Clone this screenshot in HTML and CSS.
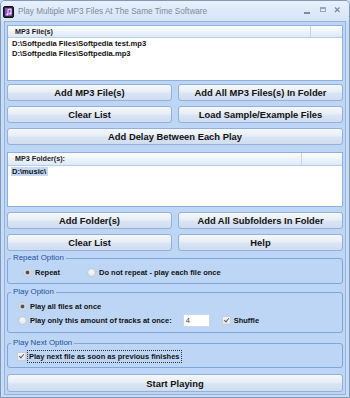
FILE: index.html
```html
<!DOCTYPE html>
<html lang="en">
<head>
    <meta charset="UTF-8">
    <meta name="viewport" content="width=device-width, initial-scale=1.0">
    <title>Play Multiple MP3 Files At The Same Time Software</title>
    <link rel="stylesheet" href="styles.css">
</head>
<body>
    <div class="window">
        <div class="titlebar">
            <svg class="app-icon" width="11" height="12" viewBox="0 0 11 12">
                <rect x="0.5" y="0.5" width="10" height="11" rx="1.5" fill="#2d2a36" stroke="#111" />
                <rect x="2" y="2" width="7" height="8" fill="#8b4fc4" />
                <path d="M5 8.5 V3.5 L8 3 V7.5" stroke="#f2e6ff" stroke-width="1" fill="none" />
                <circle cx="4.3" cy="8.5" r="1.1" fill="#f2e6ff" />
                <circle cx="7.3" cy="7.6" r="1.1" fill="#f2e6ff" />
            </svg>
            <span class="title">Play Multiple MP3 Files At The Same Time Software</span>
            <svg class="caption-buttons" width="37" height="8" viewBox="0 0 37 8">
                <rect x="0" y="5" width="6" height="2" fill="#7d8aa0" />
                <rect x="16.5" y="0.5" width="5" height="4" fill="none" stroke="#9aa6b8" />
                <rect x="16.5" y="0.5" width="5" height="1.5" fill="#9aa6b8" />
                <path d="M31 0.5 L35.5 5 M35.5 0.5 L31 5" stroke="#7d8aa0" stroke-width="1.2" />
            </svg>
        </div>

        <div class="client">
            <div class="listbox list-files">
                <div class="list-header">
                    <span class="col-main">MP3 File(s)</span>
                    <span class="col-rest"></span>
                </div>
                <div class="list-items">
                    <div class="list-item">D:\Softpedia Files\Softpedia test.mp3</div>
                    <div class="list-item">D:\Softpedia Files\Softpedia.mp3</div>
                </div>
            </div>

            <div class="btn-grid files-buttons">
                <button>Add MP3 File(s)</button>
                <button>Add All MP3 Files(s) In Folder</button>
                <button>Clear List</button>
                <button>Load Sample/Example Files</button>
                <button class="wide">Add Delay Between Each Play</button>
            </div>

            <div class="listbox list-folders">
                <div class="list-header">
                    <span class="col-main">MP3 Folder(s):</span>
                    <span class="col-rest"></span>
                </div>
                <div class="list-items">
                    <div class="list-item"><span class="selected">D:\music\</span></div>
                </div>
            </div>

            <div class="btn-grid folder-buttons">
                <button>Add Folder(s)</button>
                <button>Add All Subfolders In Folder</button>
                <button>Clear List</button>
                <button>Help</button>
            </div>

            <fieldset class="group repeat-group">
                <legend>Repeat Option</legend>
                <div class="option-row">
                    <span class="radio checked"></span>
                    <span class="label">Repeat</span>
                    <span class="radio second"></span>
                    <span class="label">Do not repeat - play each file once</span>
                </div>
            </fieldset>

            <fieldset class="group play-group">
                <legend>Play Option</legend>
                <div class="option-row">
                    <span class="radio checked"></span>
                    <span class="label">Play all files at once</span>
                </div>
                <div class="option-row tracks-row">
                    <span class="radio"></span>
                    <span class="label">Play only this amount of tracks at once:</span>
                    <span class="num-box">4</span>
                    <span class="checkbox checked"></span>
                    <span class="label">Shuffle</span>
                </div>
            </fieldset>

            <fieldset class="group next-group">
                <legend>Play Next Option</legend>
                <div class="option-row">
                    <span class="checkbox checked"></span>
                    <span class="label focused">Play next file as soon as previous finishes</span>
                </div>
            </fieldset>

            <button class="start-btn">Start Playing</button>
        </div>
    </div>
</body>
</html>
```

FILE: styles.css
```css
body {
    margin: 0;
    font-family: "Liberation Sans", Arial, sans-serif;
    background-color: #c6dbf5;
}

.window {
    width: 350px;
    height: 398px;
    box-sizing: border-box;
    border: 1px solid #7f98bb;
    border-radius: 5px 5px 0 0;
    background-color: #c8dcf5;
    padding: 0 3px 3px 3px;
    overflow: hidden;
}

.titlebar {
    height: 20px;
    display: flex;
    align-items: center;
    margin: 0 -3px;
    padding: 0 8px 0 2px;
    background: linear-gradient(#e8f0fb, #d5e4f6);
}

.app-icon {
    margin-right: 4px;
    margin-top: 1px;
}

.title {
    font-size: 8.2px;
    color: #7b8aa0;
    white-space: nowrap;
}

.caption-buttons {
    margin-left: auto;
    margin-top: -1px;
}

.client {
    display: flex;
    flex-direction: column;
    background-color: #bed6f6;
    border: 1px solid #97b3d9;
    padding: 3px 2px 2px 2px;
}

/* list views */
.listbox {
    background-color: #fff;
    border: 1px solid #8fb0dc;
    box-sizing: border-box;
}

.list-files {
    height: 56px;
}

.list-folders {
    height: 55px;
    margin-top: 7px;
}

.list-header {
    display: flex;
    height: 11px;
    background: linear-gradient(#ffffff, #edf3fb 50%, #dde9f8);
    border-bottom: 1px solid #b7cde9;
    font-size: 7.2px;
    font-weight: bold;
    line-height: 11px;
    color: #1a1a1a;
}

.list-folders .list-header {
    height: 12px;
    line-height: 12px;
}

.col-main {
    flex: 1;
    padding-left: 7px;
    border-right: 1px solid #c5d7ee;
}

.list-files .col-rest {
    width: 31px;
}

.list-folders .col-rest {
    width: 40px;
}

.list-items {
    padding: 1px 0 0 4px;
}

.list-item {
    font-size: 7.6px;
    font-weight: bold;
    line-height: 10px;
    color: #111;
    white-space: nowrap;
}

.selected {
    background-color: #c4d9f6;
    padding: 0 2px 0 1px;
    margin-left: -1px;
}

/* buttons */
.btn-grid {
    display: grid;
    grid-template-columns: 165px 165px;
    column-gap: 6px;
    row-gap: 5px;
}

.files-buttons {
    margin-top: 3px;
}

.folder-buttons {
    margin-top: 5px;
}

button {
    height: 17px;
    padding: 0;
    font-family: "Liberation Sans", Arial, sans-serif;
    font-size: 9.4px;
    font-weight: bold;
    color: #111;
    border: 1px solid #94b0d6;
    border-radius: 3px;
    background: linear-gradient(#f5f8fc, #e8eef7 45%, #d9e4f3 55%, #d0ddef);
    cursor: pointer;
}

button.wide {
    grid-column: 1 / 3;
}

.start-btn {
    height: 18px;
    margin-top: 6px;
}

/* option groups */
.group {
    margin: 0;
    padding: 0 0 6px 0;
    min-width: 0;
    border: 1px solid #7fa6d9;
    border-radius: 3px;
}

.group legend {
    font-size: 7.9px;
    line-height: 10px;
    color: #1f4f9e;
    padding: 0 2px;
    margin-left: 3px;
}

.repeat-group {
    margin-top: 2px;
}

.play-group {
    margin-top: 3px;
    padding-bottom: 5px;
}

.next-group {
    margin-top: 5px;
}

.option-row {
    display: flex;
    align-items: center;
    height: 10px;
    font-size: 7.5px;
    font-weight: bold;
    color: #111;
    white-space: nowrap;
}

.repeat-group .option-row {
    margin-top: 4px;
    padding-left: 15px;
}

.play-group .option-row {
    padding-left: 10px;
}

.play-group .option-row:first-of-type {
    margin-top: 4px;
}

.play-group .tracks-row {
    height: 14px;
    margin-top: 2px;
}

.next-group .option-row {
    margin-top: 3px;
    padding-left: 9px;
}

.radio {
    width: 7px;
    height: 7px;
    border-radius: 50%;
    border: 1px solid #c3cad3;
    background: radial-gradient(circle at 50% 40%, #f7f8fa, #dde1e6);
    margin-right: 3px;
    flex-shrink: 0;
}

.radio.checked {
    background: radial-gradient(circle, #4a4f56 0, #4a4f56 1.3px, #bcc3cc 2.2px, #eef0f3 3.5px);
}

.radio.second {
    margin-left: 27px;
}

.checkbox {
    position: relative;
    width: 7px;
    height: 7px;
    border: 1px solid #c7ced8;
    background: linear-gradient(#f4f5f7, #e2e6eb);
    margin-right: 3px;
    flex-shrink: 0;
}

.checkbox.checked::after {
    content: "";
    position: absolute;
    left: 2px;
    top: 0;
    width: 2px;
    height: 4px;
    border: solid #59616c;
    border-width: 0 1px 1px 0;
    transform: rotate(40deg);
}

.num-box {
    width: 27px;
    height: 13px;
    margin: 0 12px 0 11px;
    padding-left: 2px;
    box-sizing: border-box;
    background-color: #fff;
    border: 1px solid #c9d8ec;
    font-weight: normal;
    line-height: 12px;
    color: #444;
}

.focused {
    outline: 1px dotted #333;
    outline-offset: 1px;
    padding-right: 1px;
}
```
